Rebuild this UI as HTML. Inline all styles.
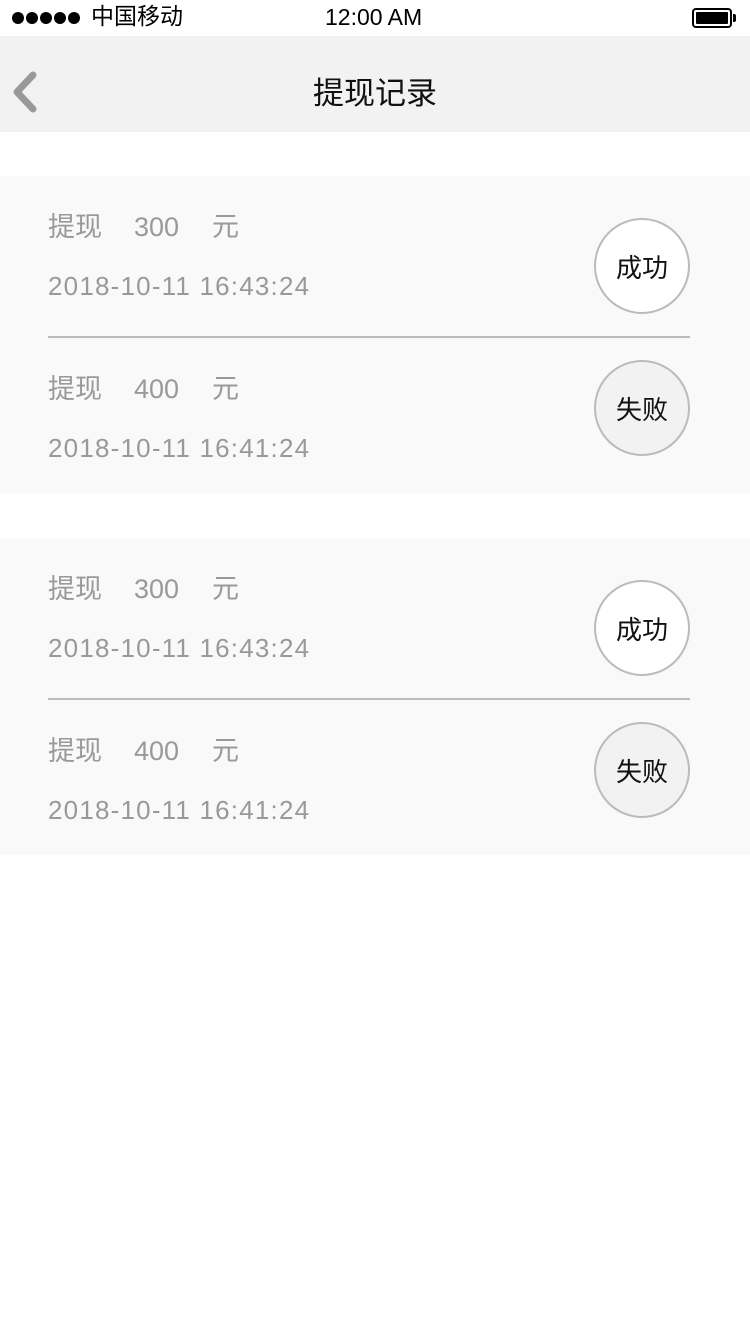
<!DOCTYPE html>
<html><head><meta charset="utf-8"><style>
*{margin:0;padding:0;box-sizing:border-box}
body{width:750px;height:1334px;background:#fff;position:relative;font-family:"Liberation Sans","Noto Sans CJK SC",sans-serif;overflow:hidden}
.abs{position:absolute}
.sb{top:0;left:0;width:750px;height:36px;font-size:24px;color:#000}
.nav{top:36px;left:0;width:750px;height:96px;background:#f2f2f2}
.card{left:0;width:750px;height:317px;background:#f9f9f9}
.t{color:#999;font-size:27px;line-height:30px;white-space:pre}
.d{color:#999;font-size:26px;line-height:30px;white-space:pre;letter-spacing:1.2px}
.c{width:96px;height:96px;border-radius:50%;border:2px solid #bbb;font-size:26px;color:#111;display:flex;align-items:center;justify-content:center}
.line{left:48px;width:642px;height:2px;background:#bbb}
.dot{position:absolute;top:12px;width:12px;height:12px;border-radius:50%;background:#000}
</style></head><body>
<div class="abs sb">
 <div class="dot" style="left:12px"></div><div class="dot" style="left:26px"></div><div class="dot" style="left:40px"></div><div class="dot" style="left:54px"></div><div class="dot" style="left:68px"></div>
 <div class="abs" style="left:91px;top:1px;font-size:23px;line-height:30px">中国移动</div>
 <div class="abs" style="left:325px;top:2px;font-size:23px;line-height:30px">12:00 AM</div>
 <div class="abs" style="left:692px;top:8px;width:40px;height:20px;border:2px solid #000;border-radius:4px;padding:2px"><div style="width:100%;height:100%;background:#000;border-radius:1px"></div></div>
 <div class="abs" style="left:733px;top:14px;width:3px;height:8px;background:#000;border-radius:0 2px 2px 0"></div>
</div>
<div class="abs nav">
 <svg class="abs" style="left:8px;top:34px" width="32" height="44" viewBox="0 0 32 44"><path d="M25 5 L9 22 L25 39" stroke="#999" stroke-width="7" fill="none" stroke-linecap="round" stroke-linejoin="round"/></svg>
 <div class="abs" style="left:0;width:750px;top:40px;text-align:center;font-size:31px;line-height:36px;color:#111">提现记录</div>
</div>

<div class="abs card" style="top:176px"></div>
<div class="abs t" style="left:48px;top:212px">提现</div><div class="abs t" style="left:134px;top:212px">300</div><div class="abs t" style="left:212px;top:212px">元</div>
<div class="abs d" style="left:48px;top:271px">2018-10-11 16:43:24</div>
<div class="abs c" style="left:594px;top:218px;background:#fff">成功</div>
<div class="abs line" style="top:336px"></div>
<div class="abs t" style="left:48px;top:374px">提现</div><div class="abs t" style="left:134px;top:374px">400</div><div class="abs t" style="left:212px;top:374px">元</div>
<div class="abs d" style="left:48px;top:433px">2018-10-11 16:41:24</div>
<div class="abs c" style="left:594px;top:360px;background:#f2f2f2">失败</div>

<div class="abs card" style="top:538px"></div>
<div class="abs t" style="left:48px;top:574px">提现</div><div class="abs t" style="left:134px;top:574px">300</div><div class="abs t" style="left:212px;top:574px">元</div>
<div class="abs d" style="left:48px;top:633px">2018-10-11 16:43:24</div>
<div class="abs c" style="left:594px;top:580px;background:#fff">成功</div>
<div class="abs line" style="top:698px"></div>
<div class="abs t" style="left:48px;top:736px">提现</div><div class="abs t" style="left:134px;top:736px">400</div><div class="abs t" style="left:212px;top:736px">元</div>
<div class="abs d" style="left:48px;top:795px">2018-10-11 16:41:24</div>
<div class="abs c" style="left:594px;top:722px;background:#f2f2f2">失败</div>
</body></html>
